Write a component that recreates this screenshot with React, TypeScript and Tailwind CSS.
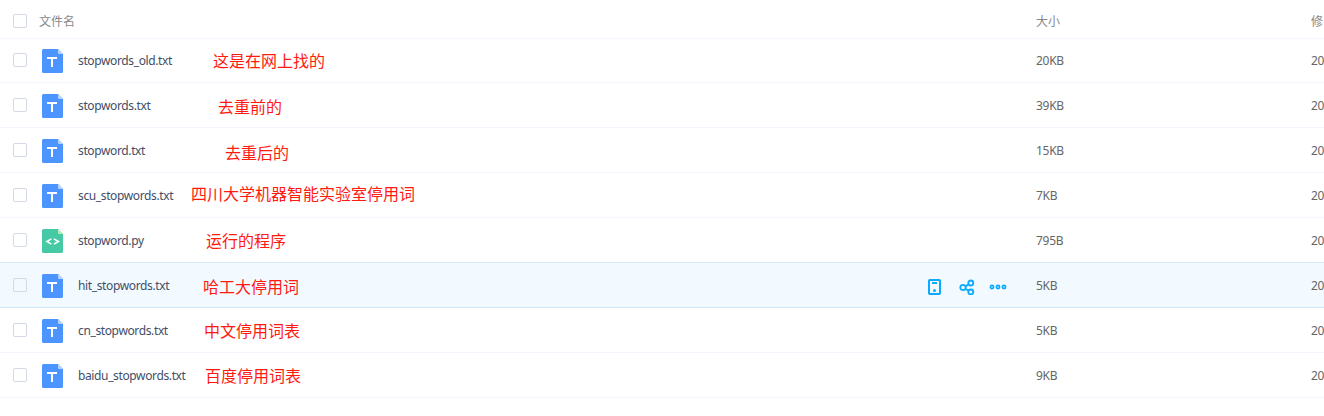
interface FileRow {
    name: string;
    size: string;
    note: string;
    notePos: string;
    type: "txt" | "py";
    active?: boolean;
}

const files: FileRow[] = [
    { name: "stopwords_old.txt", size: "20KB", note: "这是在网上找的", notePos: "left-[213px] top-[9px]", type: "txt" },
    { name: "stopwords.txt", size: "39KB", note: "去重前的", notePos: "left-[218px] top-[11px]", type: "txt" },
    { name: "stopword.txt", size: "15KB", note: "去重后的", notePos: "left-[225px] top-[12px]", type: "txt" },
    { name: "scu_stopwords.txt", size: "7KB", note: "四川大学机器智能实验室停用词", notePos: "left-[191px] top-[8px]", type: "txt" },
    { name: "stopword.py", size: "795B", note: "运行的程序", notePos: "left-[206px] top-[10px]", type: "py" },
    { name: "hit_stopwords.txt", size: "5KB", note: "哈工大停用词", notePos: "left-[203px] top-[11px]", type: "txt", active: true },
    { name: "cn_stopwords.txt", size: "5KB", note: "中文停用词表", notePos: "left-[204px] top-[10px]", type: "txt" },
    { name: "baidu_stopwords.txt", size: "9KB", note: "百度停用词表", notePos: "left-[205px] top-[10px]", type: "txt" },
];

const Checkbox = () => (
    <span className="block h-3.5 w-3.5 shrink-0 rounded-xs border border-[#d3d9e6]" />
);

const FileIcon = ({ type }: { type: FileRow["type"] }) => (
    <svg className="relative top-px ml-[15px] shrink-0" width="21" height="24" viewBox="0 0 21 24" fill="none">
        <path
            d="M1.5 0H16l5 5v17.5a1.5 1.5 0 0 1-1.5 1.5h-18A1.5 1.5 0 0 1 0 22.5v-21A1.5 1.5 0 0 1 1.5 0Z"
            fill={type === "txt" ? "#4c94ff" : "#46c9a5"}
        />
        <path d="M16 0l5 5h-3.8A1.2 1.2 0 0 1 16 3.8Z" fill={type === "txt" ? "#b4d3ff" : "#b9edb0"} />
        {type === "txt" ? (
            <path d="M5 9h10M10 9v9" stroke="#fff" strokeWidth="2" />
        ) : (
            <path d="M9.4 9.9 4.8 12.5l4.6 2.6M11.9 9.9l4.6 2.6-4.6 2.6" stroke="#fff" strokeWidth="1.5" />
        )}
    </svg>
);

const RowActions = () => (
    <div className="flex items-center text-[#09aaff]">
        {/* Save to device */}
        <svg width="13" height="16" viewBox="0 0 13 16" fill="none" stroke="currentColor" strokeWidth="2">
            <rect x="1" y="1" width="11" height="14" rx="0.8" />
            <path d="M4 4h5" />
            <circle cx="6.5" cy="11.5" r="1.5" fill="currentColor" stroke="none" />
        </svg>
        {/* Share */}
        <svg className="ml-[18px]" width="16" height="16" viewBox="0 0 16 16" fill="none" stroke="currentColor" strokeWidth="1.8">
            <circle cx="4" cy="8.5" r="2.7" />
            <circle cx="11.8" cy="4" r="2.5" />
            <circle cx="11.8" cy="13" r="2.5" />
            <path d="M6.4 7.6 9.6 5.3M6.2 9.8l3.4 2" />
        </svg>
        {/* More */}
        <svg className="ml-[14px]" width="18" height="16" viewBox="0 0 18 16" fill="none" stroke="currentColor" strokeWidth="1.7">
            <circle cx="3" cy="8" r="1.6" />
            <circle cx="9" cy="8" r="1.6" />
            <circle cx="15" cy="8" r="1.6" />
        </svg>
    </div>
);

const App = () => {
    return (
        <div className="h-[416px] w-full overflow-hidden bg-white font-['Noto_Sans','Noto_Sans_CJK_SC',sans-serif] text-xs">
            {/* Table header */}
            <div className="flex h-[38px] items-center pt-1 pl-[13px] font-['Noto_Sans_CJK_SC',sans-serif] text-[#888]">
                <Checkbox />
                <span className="-mt-px ml-3 w-[997px] shrink-0">文件名</span>
                <span className="-mt-px w-[275px] shrink-0">大小</span>
                <span className="-mt-px shrink-0">修</span>
            </div>

            {files.map((file) => (
                <div
                    key={file.name}
                    className={`relative -mt-px flex h-[46px] items-center border-y pl-[13px] nth-2:mt-0 nth-2:h-[45px] nth-2:pb-px ${
                        file.active ? "z-10 border-[#d0e8fb] bg-[#f2faff]" : "border-[#f2f6fd]"
                    }`}
                >
                    <Checkbox />
                    <FileIcon type={file.type} />
                    <div className="ml-[15px] w-[850px] shrink-0 pt-0.5 tracking-[-0.37px] text-[#424e67]">{file.name}</div>
                    <div className="w-[108px] shrink-0 pt-1">{file.active && <RowActions />}</div>
                    <div className="w-[275px] shrink-0 pt-0.5 tracking-[-0.3px] text-[#666]">{file.size}</div>
                    <div className="shrink-0 pt-0.5 tracking-[-0.4px] text-[#666]">20</div>
                    <span
                        className={`absolute font-['Noto_Sans_CJK_SC',sans-serif] text-base leading-6 whitespace-nowrap text-[#ff1a10] ${file.notePos}`}
                    >
                        {file.note}
                    </span>
                </div>
            ))}
        </div>
    );
};

export default App;
